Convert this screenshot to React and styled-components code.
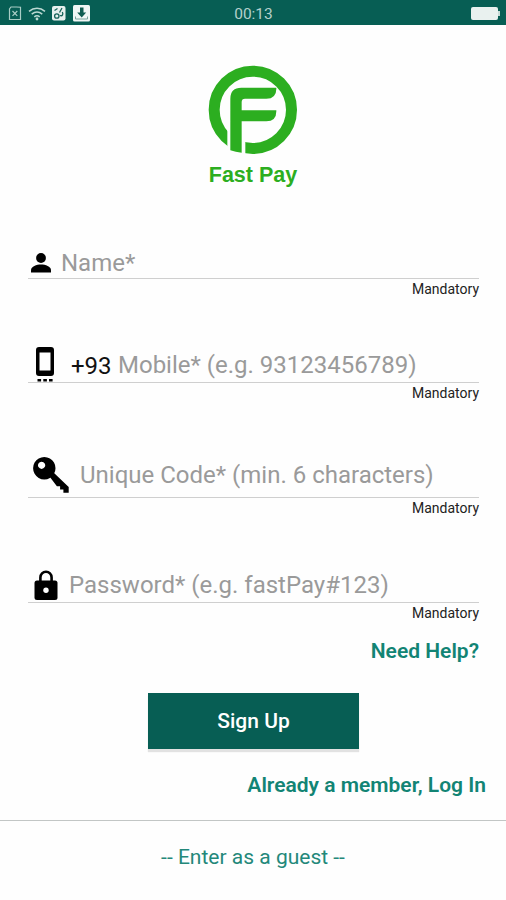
import React from "react";
import styled, { createGlobalStyle } from "styled-components";

const fields = [
  { id: "name", icon: "person", text: "Name*", gap: 0, height: 31, left: 33 },
  { id: "mobile", icon: "phone", prefix: "+93", text: "Mobile* (e.g. 93123456789)", gap: 48, height: 34, left: 43 },
  { id: "code", icon: "key", text: "Unique Code* (min. 6 characters)", gap: 48, height: 45, left: 52 },
  { id: "password", icon: "lock", text: "Password* (e.g. fastPay#123)", gap: 49, height: 34, left: 41 },
];

const StatusIcons = () => (
  <svg width="84" height="20" viewBox="0 0 84 20" fill="none">
    <g stroke="#a9cdc5" strokeWidth="1.2">
      <path d="M4 3h5.5L13.500 3.200V15.500H2.500V5z" />
      <path d="M5.500 7l4.800 4.800M10.300 7l-4.800 4.800" />
    </g>
    <g stroke="#bcd8d2" strokeWidth="1.5">
      <path d="M22 7.300c4.800-4 11.200-4 16 0M24.700 10.200c3.200-2.600 7.400-2.600 10.600 0M27.300 12.900c1.600-1.300 3.800-1.300 5.400 0" />
    </g>
    <circle cx="30" cy="15" r="1.400" fill="#bcd8d2" />
    <rect x="45" y="2" width="13.500" height="14.500" rx="2" fill="#e6f0ee" />
    <g stroke="#17645a" strokeWidth="1.300">
      <circle cx="49.800" cy="12" r="2.200" />
      <path d="M53 11.500c2.500 1 3.500-1.500 2.300-3.500M52.500 8.500l2.500-4.500M47.500 6.500l3-2" />
    </g>
    <rect x="66" y="1" width="17" height="16.500" rx="1.500" fill="#f1f6f5" />
    <path d="M73 3.500h3.500v5h2.700l-4.500 5-4.500-5H73z" fill="#105c51" />
    <path d="M68.500 12.500v2.500h12v-2.500" stroke="#7ba59e" strokeWidth="1" />
  </svg>
);

const Logo = () => (
  <svg width="90" height="90" viewBox="40 30 270 270">
    <circle cx="174.500" cy="164.500" r="116" fill="none" stroke="#2cae20" strokeWidth="33" />
    <path d="M98 215h54v90H98z" fill="#fefefe" />
    <path
      d="M107 286V131q0-33 33-33h105v3q0 30-30 30h-64q-10 0-10 10v25h104v3q0 30-30 30h-74v94q-18-1-34-7z"
      fill="#2cae20"
    />
  </svg>
);

const FieldIcon = ({ name }) => {
  switch (name) {
    case "person":
      return (
        <IconShape width="22" height="22" viewBox="0 0 22 22" $x={2} $y={1}>
          <circle cx="11" cy="6" r="4.9" />
          <path d="M1 20.5v-2.3c0-3.6 5.6-5.6 10-5.6s10 2 10 5.6v2.3z" />
        </IconShape>
      );
    case "phone":
      return (
        <IconShape width="22" height="36" viewBox="0 0 22 36" $x={7} $y={-1}>
          <path
            fillRule="evenodd"
            d="M4 0h12a3 3 0 0 1 3 3v23a3 3 0 0 1-3 3H4a3 3 0 0 1-3-3V3a3 3 0 0 1 3-3zM4.500 5.500v18h11v-18z"
          />
          <path d="M2.500 32h3.600v2.600H2.500zM8.300 32h3.600v2.600H8.300zM14 32h3.600v2.600H14z" />
        </IconShape>
      );
    case "key":
      return (
        <IconShape width="38" height="38" viewBox="0 0 38 38" $x={4} $y={0}>
          <path fillRule="evenodd" d="M12.3 1a11.2 11.2 0 1 1-.01 0zM9.6 5.7a3.6 3.6 0 1 0 .01 0z" />
          <path d="M17.5 20.5l4-4 15.200 14.600v5.700h-5.300v-3.200h-3.300v-3.300h-3.200z" />
        </IconShape>
      );
    default:
      return (
        <IconShape width="24" height="31" viewBox="0 0 24 31" $x={6} $y={0}>
          <path d="M6.400 12V7.400a5.600 5.600 0 0 1 11.200 0V12" fill="none" stroke="#000" strokeWidth="2.600" />
          <rect x="0.500" y="10.500" width="23" height="19.500" rx="2.500" />
          <circle cx="12" cy="20.200" r="2.700" fill="#fff" />
        </IconShape>
      );
  }
};

const App = () => {
  return (
    <Screen>
      <GlobalStyle />
      <StatusBar>
        <StatusIcons />
        <Clock>00:13</Clock>
        <Battery />
      </StatusBar>

      <Brand>
        <Logo />
        <BrandName>Fast Pay</BrandName>
      </Brand>

      <Form>
        {fields.map((field) => (
          <Field key={field.id} $gap={field.gap}>
            <FieldRow $height={field.height}>
              <IconSlot $width={field.left}>
                <FieldIcon name={field.icon} />
              </IconSlot>
              {field.prefix && <Prefix>{field.prefix}</Prefix>}
              <Hint>{field.text}</Hint>
            </FieldRow>
            <Mandatory>Mandatory</Mandatory>
          </Field>
        ))}
        <HelpLink>Need Help?</HelpLink>
      </Form>

      <SignUpButton>Sign Up</SignUpButton>
      <LoginLink>Already a member, Log In</LoginLink>
      <GuestBar>
        <GuestLink>-- Enter as a guest --</GuestLink>
      </GuestBar>
    </Screen>
  );
};

const GlobalStyle = createGlobalStyle`
  * {
    box-sizing: border-box;
  }
  body {
    margin: 0;
    background: #fefefe;
  }
`;

const Screen = styled.div`
  display: flex;
  flex-direction: column;
  width: 506px;
  height: 900px;
  overflow: hidden;
  background: #fefefe;
  font-family: Roboto, sans-serif;
`;

const StatusBar = styled.div`
  display: grid;
  grid-template-columns: 1fr auto 1fr;
  align-items: center;
  height: 25px;
  padding: 0 6px 0 7px;
  background: #075e54;
`;

const Clock = styled.span`
  color: #b4d0cb;
  font-size: 15.5px;
  line-height: 25px;
  padding-top: 2px;
`;

const Battery = styled.div`
  position: relative;
  justify-self: end;
  width: 27px;
  height: 13px;
  margin-right: 2px;
  border-radius: 2px;
  background: #e9f1ef;

  &::after {
    content: "";
    position: absolute;
    right: -2px;
    top: 4px;
    width: 2px;
    height: 5px;
    background: #c6dad6;
  }
`;

const Brand = styled.div`
  display: flex;
  flex-direction: column;
  align-items: center;
  height: 222px;
  padding-top: 40px;
`;

const BrandName = styled.div`
  margin-top: 7px;
  color: #2cae20;
  font-family: "Liberation Sans", Arial, sans-serif;
  font-size: 21.5px;
  font-weight: bold;
  line-height: 26px;
`;

const Form = styled.div`
  display: flex;
  flex-direction: column;
  padding: 0 27px 0 28px;
`;

const Field = styled.div`
  margin-top: ${(props) => props.$gap}px;
`;

const FieldRow = styled.div`
  display: flex;
  align-items: center;
  height: ${(props) => props.$height + 1}px;
  border-bottom: 1px solid #cfcfcf;
`;

const IconSlot = styled.div`
  display: flex;
  flex-shrink: 0;
  width: ${(props) => props.$width}px;
`;

const IconShape = styled.svg`
  display: block;
  margin-left: ${(props) => props.$x}px;
  margin-top: ${(props) => props.$y}px;
`;

const Prefix = styled.span`
  width: 47px;
  color: #111;
  font-size: 24px;
  line-height: 28px;
  padding-top: 2px;
`;

const Hint = styled.span`
  color: #9a9a9a;
  font-size: 24px;
  line-height: 28px;
  white-space: nowrap;
`;

const Mandatory = styled.div`
  height: 21px;
  color: #222;
  font-size: 14px;
  line-height: 21px;
  text-align: right;
`;

const HelpLink = styled.a`
  margin-top: 15px;
  color: #128474;
  font-size: 21px;
  font-weight: 600;
  line-height: 24px;
  text-align: right;
`;

const SignUpButton = styled.button`
  align-self: center;
  width: 211px;
  height: 56px;
  margin: 30px 0 0 1px;
  padding: 0;
  border: none;
  background: #075e54;
  box-shadow: 0 3px 1px #e2e2e2;
  color: #fff;
  font-family: inherit;
  font-size: 21px;
  font-weight: 500;
`;

const LoginLink = styled.a`
  align-self: flex-end;
  margin: 24px 20px 0 0;
  color: #128474;
  font-size: 21px;
  font-weight: 600;
  line-height: 24px;
`;

const GuestBar = styled.div`
  margin-top: 23px;
  padding-top: 23px;
  border-top: 1px solid #c2c6c5;
  text-align: center;
`;

const GuestLink = styled.a`
  color: #23887a;
  font-size: 21px;
  line-height: 26px;
`;

export default App;
